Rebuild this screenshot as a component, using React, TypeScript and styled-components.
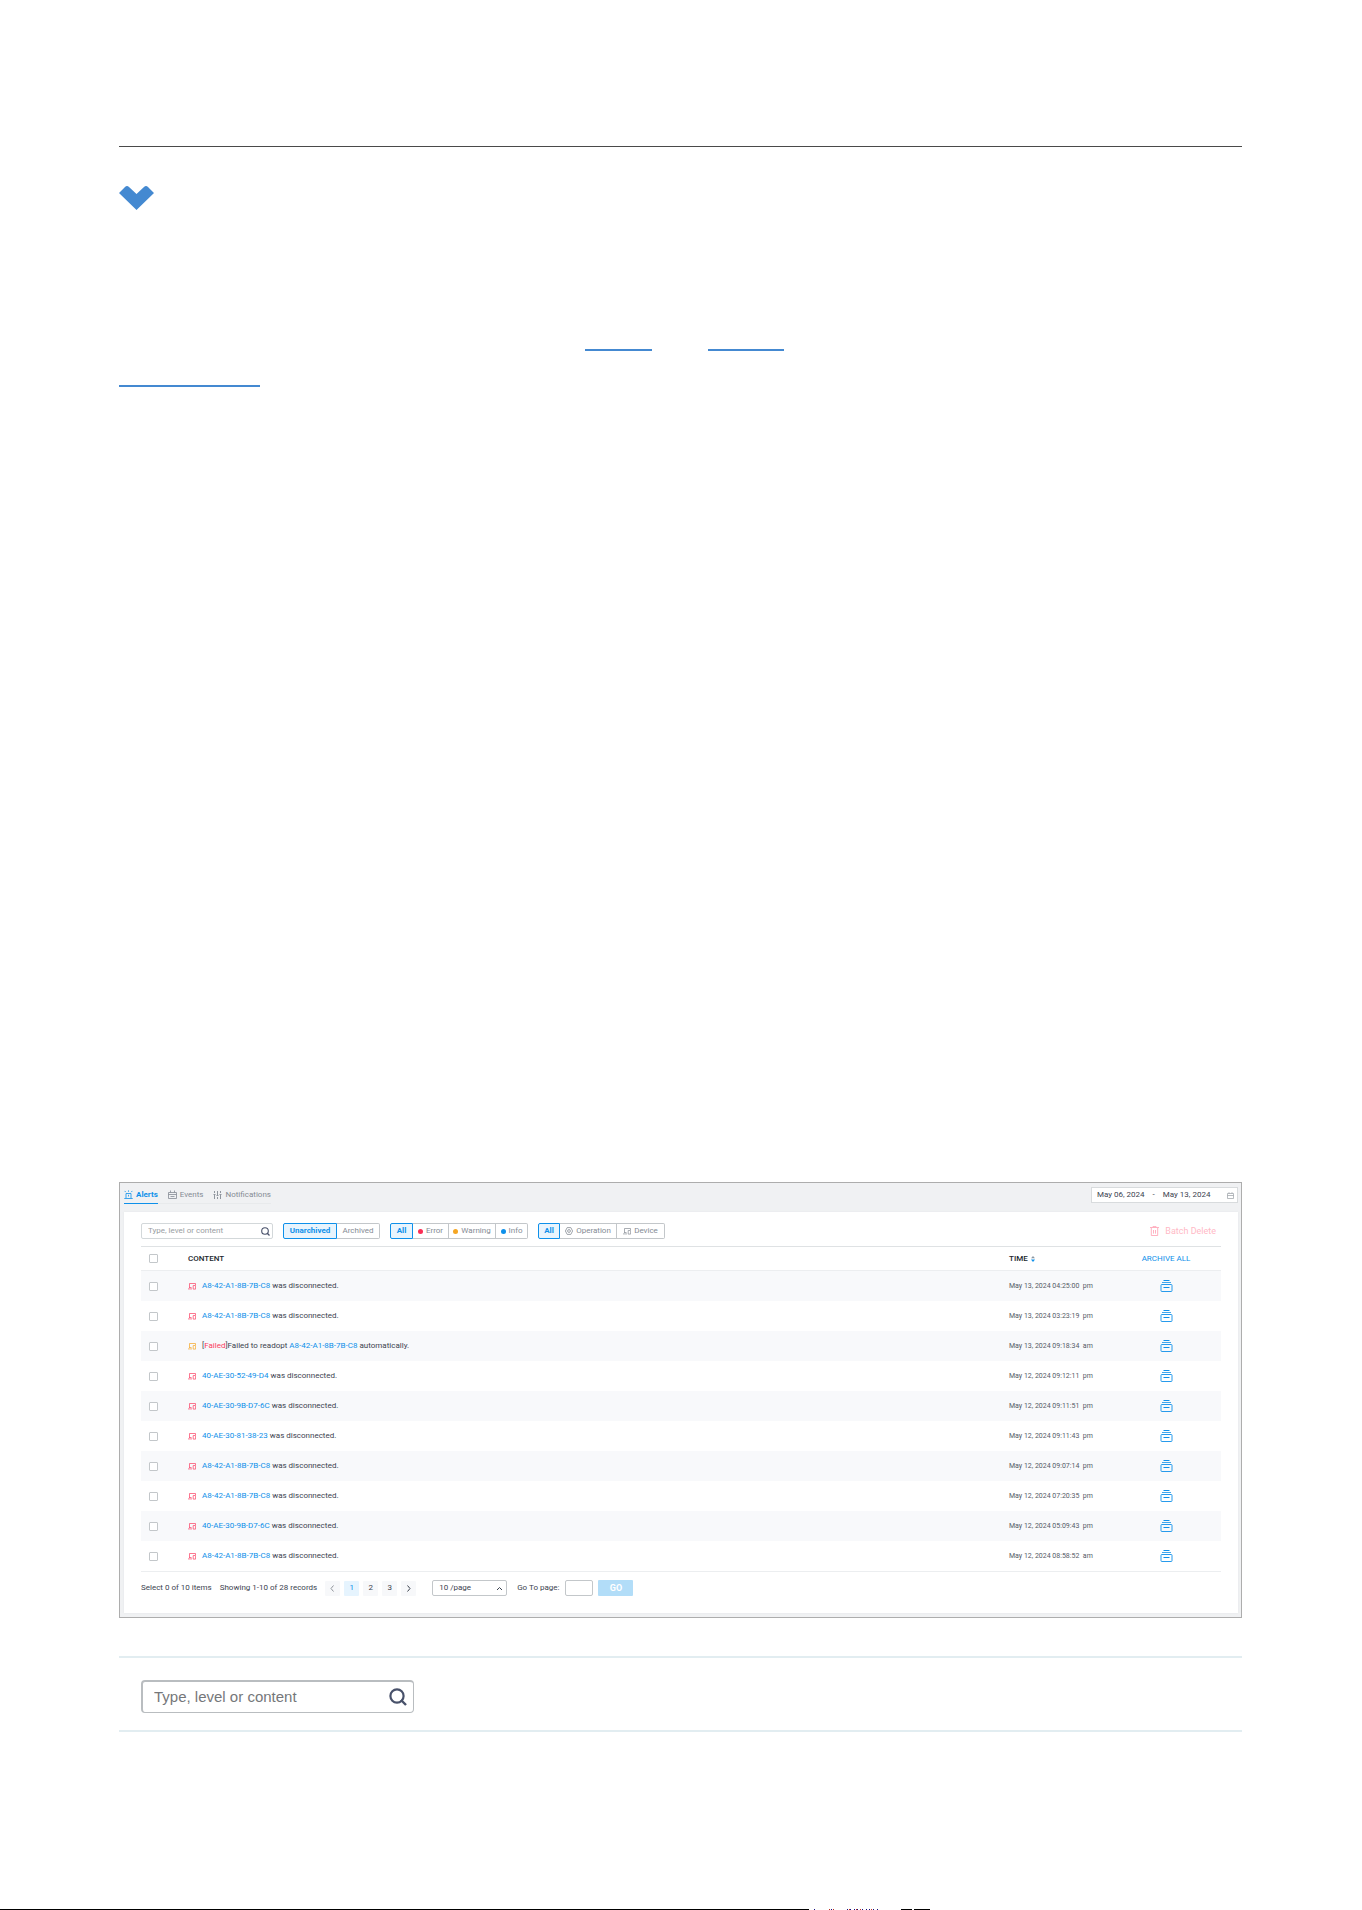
import React from "react";
import styled, { createGlobalStyle } from "styled-components";

const BLUE = "#0e90ea";
const INK = "#3c4350";
const MUTED = "#858b94";
const LINE = "#c3c7ca";
const RED = "#fa3d62";
const AMBER = "#f5a623";

const Global = createGlobalStyle`
  *, *::before, *::after { box-sizing: border-box; }
  body { margin: 0; background: #fff; }
  body, button, input, select {
    font-family: Roboto, "Liberation Sans", Arial, sans-serif;
    font-size: 8px;
    line-height: 10px;
    color: ${INK};
  }
  a { color: ${BLUE}; text-decoration: none; }
  button { padding: 0; border: 0; background: none; cursor: pointer; }
  svg { display: block; flex: none; }
`;

const Page = styled.main`
  padding: 146px 120px 177px 119px;
`;

const TopRule = styled.hr`
  margin: 0 0 39px;
  border: 0;
  height: 1px;
  background: #4a4a4a;
`;

const Paragraph = styled.div`
  margin: 105px 0 795px;
`;

const ParagraphLine = styled.div<{ $indent?: number }>`
  display: flex;
  gap: 56px;
  height: 36px;
  padding-left: ${(p) => p.$indent ?? 0}px;
`;

const Underlined = styled.a<{ $width: number }>`
  width: ${(p) => p.$width}px;
  border-bottom: 2px solid #4489d1;
`;

const Panel = styled.section`
  border: 1px solid #adadad;
  background: #f0f1f3;
  padding: 0 3px 4px 4px;
`;

const TopBar = styled.header`
  display: flex;
  justify-content: space-between;
  align-items: center;
  height: 29px;
  padding-bottom: 5px;
`;

const Tabs = styled.nav`
  display: flex;
  gap: 10px;
  height: 17px;
  border-bottom: 1px solid #e8eaec;
`;

const Tab = styled.a<{ $active?: boolean }>`
  display: flex;
  align-items: center;
  gap: 3px;
  height: 17px;
  color: ${(p) => (p.$active ? BLUE : MUTED)};
  font-weight: ${(p) => (p.$active ? 700 : 400)};
  border-bottom: 1px solid ${(p) => (p.$active ? BLUE : "transparent")};
`;

const DateRange = styled.button`
  display: flex;
  align-items: center;
  gap: 8px;
  width: 147px;
  height: 16px;
  padding: 0 3px 0 5px;
  border: 1px solid #d8dbdd;
  background: #fff;
  & > svg { margin-left: auto; }
`;

const Card = styled.div`
  background: #fff;
  padding: 0 17px;
  box-shadow: 0 0 2px #e4e6e8;
`;

const Toolbar = styled.div`
  display: flex;
  align-items: center;
  gap: 10px;
  height: 34px;
  padding-top: 4px;
`;

const SearchBox = styled.label<{ $large?: boolean }>`
  display: flex;
  align-items: center;
  justify-content: space-between;
  width: ${(p) => (p.$large ? 273 : 132)}px;
  height: ${(p) => (p.$large ? 33 : 16)}px;
  padding: ${(p) => (p.$large ? "0 6px 0 11px" : "0 2px 0 6px")};
  border: ${(p) => (p.$large ? "2px solid #b9bdc0" : "1px solid #d3d8da")};
  border-width: ${(p) => (p.$large ? "2px 1px 1px 2px" : "1px")};
  border-radius: ${(p) => (p.$large ? 4 : 2)}px;
  background: #fff;
`;

const SearchInput = styled.input<{ $large?: boolean }>`
  flex: 1;
  min-width: 0;
  padding: 0;
  border: 0;
  outline: 0;
  background: none;
  font-family: ${(p) => (p.$large ? '"Liberation Sans", Arial, sans-serif' : "inherit")};
  font-size: ${(p) => (p.$large ? 15 : 8)}px;
  line-height: ${(p) => (p.$large ? 18 : 10)}px;
  &::placeholder {
    color: ${(p) => (p.$large ? "#75777a" : "#999da2")};
    opacity: 1;
  }
`;

const SegmentGroup = styled.div`
  display: flex;
`;

const Segment = styled.button<{ $width: number; $active?: boolean }>`
  display: flex;
  align-items: center;
  justify-content: center;
  gap: 3px;
  width: ${(p) => p.$width}px;
  height: 16px;
  color: ${(p) => (p.$active ? BLUE : MUTED)};
  font-weight: ${(p) => (p.$active ? 700 : 400)};
  background: ${(p) => (p.$active ? "#e8f4fd" : "#fff")};
  border: 1px solid ${(p) => (p.$active ? BLUE : LINE)};
  border-left-width: ${(p) => (p.$active ? 1 : 0)}px;
  &:first-child { border-radius: 2px 0 0 2px; }
  &:last-child { border-radius: 0 2px 2px 0; }
`;

const Dot = styled.span<{ $color: string }>`
  width: 5px;
  height: 5px;
  border-radius: 50%;
  background: ${(p) => p.$color};
`;

const BatchDelete = styled.button`
  display: flex;
  align-items: center;
  gap: 6px;
  margin-left: auto;
  padding-right: 5px;
  color: #ffb9c6;
  font-size: 9px;
`;

const Table = styled.table`
  width: 100%;
  border-collapse: separate;
  border-spacing: 0;
  table-layout: fixed;
`;

const Head = styled.th<{ $width?: number; $center?: boolean }>`
  width: ${(p) => (p.$width ? `${p.$width}px` : "auto")};
  height: 25px;
  padding: 0;
  text-align: ${(p) => (p.$center ? "center" : "left")};
  font-weight: 500;
  color: #22262e;
  border-top: 1px solid #dfe2e4;
  border-bottom: 1px solid #eceef0;
`;

const HeadLabel = styled.span`
  display: flex;
  align-items: center;
  gap: 3px;
`;

const Row = styled.tr`
  &:nth-child(odd) { background: #f8f9fb; }
`;

const Cell = styled.td<{ $center?: boolean }>`
  height: 30px;
  padding: 0;
  text-align: ${(p) => (p.$center ? "center" : "left")};
`;

const Tick = styled.input`
  display: block;
  appearance: none;
  width: 9px;
  height: 9px;
  margin: 0 0 0 8px;
  border: 1px solid ${LINE};
  border-radius: 1px;
  background: #fff;
`;

const Message = styled.div`
  display: flex;
  align-items: center;
  gap: 6px;
`;

const Failed = styled.span`
  color: ${RED};
`;

const Time = styled.time`
  display: block;
  font-size: 7px;
  color: #555b66;
  white-space: pre;
`;

const IconButton = styled.button`
  display: inline-block;
  vertical-align: middle;
`;

const ArchiveAll = styled.button`
  color: ${BLUE};
  font-weight: 400;
`;

const Footer = styled.footer`
  display: flex;
  align-items: center;
  gap: 8px;
  height: 42px;
  padding-bottom: 9px;
  border-top: 1px solid #eceef0;
`;

const Pager = styled.div`
  display: flex;
  gap: 4px;
`;

const PageButton = styled.button<{ $active?: boolean }>`
  display: flex;
  align-items: center;
  justify-content: center;
  width: 15px;
  height: 15px;
  border-radius: 1px;
  background: ${(p) => (p.$active ? "#e6f4fe" : "#f7f8fa")};
  color: ${(p) => (p.$active ? BLUE : INK)};
`;

const SizePicker = styled.label`
  display: grid;
  align-items: center;
  width: 75px;
  margin: 0 2px 0 8px;
  & > * { grid-area: 1 / 1; }
  & > svg { justify-self: end; margin-right: 4px; pointer-events: none; }
`;

const Select = styled.select`
  appearance: none;
  width: 100%;
  height: 16px;
  padding: 0 6px;
  border: 1px solid ${LINE};
  border-radius: 2px;
  background: #fff;
`;

const GoTo = styled.label`
  display: flex;
  align-items: center;
  gap: 6px;
`;

const PageInput = styled.input`
  width: 28px;
  height: 16px;
  padding: 0 3px;
  border: 1px solid ${LINE};
  border-radius: 2px;
`;

const GoForm = styled.form`
  display: flex;
  gap: 5px;
`;

const GoButton = styled.button`
  width: 35px;
  height: 16px;
  border-radius: 1px;
  background: #b2ddf8;
  color: #fff;
  font-size: 9px;
  font-weight: 700;
`;

const SearchSection = styled.section`
  margin-top: 38px;
  padding: 22px 22px 17px;
  border-top: 2px solid #e2edf1;
  border-bottom: 2px solid #e2edf1;
`;

const EdgeStrip = styled.div`
  display: flex;
  width: 100%;
  height: 1px;
`;

const EdgeBar = styled.div`
  width: 809px;
  background: #000;
`;

const Heart = () => (
  <svg width="35" height="24" viewBox="0 0 35 24" aria-hidden="true">
    <path d="M0 7 6 1Q8-1 10 1L17.5 8 25 1Q27-1 29 1L35 7 17.5 24Z" fill="#4489d1" />
  </svg>
);

const SearchIcon = ({ size }: { size: number }) => (
  <svg width={size} height={size} viewBox="0 0 18 18" fill="none" stroke="#48516a" aria-hidden="true">
    <circle cx="8" cy="8" r="6.6" strokeWidth="2.2" />
    <path d="m12 12 5 5" strokeWidth="2.4" />
  </svg>
);

const AlarmIcon = () => (
  <svg width="9" height="9" viewBox="0 0 9 9" fill="none" stroke={BLUE} strokeWidth=".8" aria-hidden="true">
    <path d="M2 8V3.5h5V8M.3 8.5h8.4M4.5.4v1.4M.6.9l1.2 1.2M8.4.9 7.2 2.1M4.5 4.8v1.7" />
  </svg>
);

const EventsIcon = () => (
  <svg width="9" height="9" viewBox="0 0 9 9" fill="none" stroke={MUTED} strokeWidth=".8" aria-hidden="true">
    <path d="M.5 2.5h8v6h-8ZM.5 4.5h8M2.5.5v2M6.5.5v2M2.5 6.5h4" />
  </svg>
);

const CalendarIcon = () => (
  <svg width="7" height="7" viewBox="0 0 7 7" fill="none" stroke="#9a9fa5" strokeWidth=".7" aria-hidden="true">
    <path d="M.5 1.5h6v5h-6ZM.5 3.5h6M2 .2v1.3M5 .2v1.3" />
  </svg>
);

const SlidersIcon = () => (
  <svg width="9" height="8" viewBox="0 0 9 8" fill="none" stroke={MUTED} strokeWidth=".9" aria-hidden="true">
    <path d="M1.5 0v2M1.5 4v4M4.5 0v4M4.5 6v2M7.5 0v2M7.5 4v4M.5 3.5h2M3.5 4.5h2M6.5 3.5h2" />
  </svg>
);

const GearIcon = () => (
  <svg width="8" height="8" viewBox="0 0 8 8" fill="none" stroke={MUTED} strokeWidth=".8" aria-hidden="true">
    <path d="M2.2.6h3.6L7.6 4 5.8 7.4H2.2L.4 4Z" />
    <circle cx="4" cy="4" r="1.4" />
  </svg>
);

const DeviceIcon = ({ color }: { color: string }) => (
  <svg width="8" height="8" viewBox="0 0 8 8" fill="none" stroke={color} strokeWidth=".7" aria-hidden="true">
    <path d="M1.5 6V1.5h6V3M0 6.9h4M7.6 3.5v3.6H5.2V3.5ZM1.5 5.5h2" />
  </svg>
);

const TrashIcon = () => (
  <svg width="9" height="10" viewBox="0 0 9 10" fill="none" stroke="#ffa9ba" strokeWidth=".9" aria-hidden="true">
    <path d="M0 1.5h9M3 1.2V.4h3v.8M1.3 2v7.5h6.4V2M3.5 4v3.6M5.5 4v3.6" />
  </svg>
);

const SortIcon = () => (
  <svg width="4" height="6" viewBox="0 0 4 6" aria-hidden="true">
    <path d="M0 2.3 2 0l2 2.3Z" fill="#8b97a3" />
    <path d="M0 3.6h4L2 6Z" fill={BLUE} />
  </svg>
);

const ArchiveIcon = () => (
  <svg width="13" height="12" viewBox="0 0 13 12" fill="none" stroke={BLUE} aria-hidden="true">
    <path d="M3.5.5h6" />
    <path d="M2 2.5h9" strokeWidth=".8" />
    <rect x="1" y="4.5" width="11" height="7" rx=".8" strokeWidth=".9" />
    <path d="M3.5 7.5h6" />
  </svg>
);

const Chevron = ({ d, color = INK }: { d: string; color?: string }) => (
  <svg width="7" height="7" viewBox="0 0 7 7" fill="none" stroke={color} aria-hidden="true">
    <path d={d} />
  </svg>
);

const EdgeBits = () => (
  <svg width="125" height="1" viewBox="0 0 125 1" shapeRendering="crispEdges" aria-hidden="true">
    {[5, 22, 38, 41, 45, 48, 53, 57, 60, 64, 68].map((x) => (
      <rect key={x} x={x} width="1" height="1" fill="#1a1080" />
    ))}
    {[20, 24, 40, 47, 51, 62].map((x) => (
      <rect key={x} x={x} width="1" height="1" fill="#c03020" />
    ))}
    <rect x="92" width="11" height="1" fill="#000" />
    <rect x="105" width="16" height="1" fill="#000" />
  </svg>
);

type Alert = { mac: string; time: string; failed?: boolean };

const alerts: Alert[] = [
  { mac: "A8-42-A1-8B-7B-C8", time: "May 13, 2024 04:25:00  pm" },
  { mac: "A8-42-A1-8B-7B-C8", time: "May 13, 2024 03:23:19  pm" },
  { mac: "A8-42-A1-8B-7B-C8", time: "May 13, 2024 09:18:34  am", failed: true },
  { mac: "40-AE-30-52-49-D4", time: "May 12, 2024 09:12:11  pm" },
  { mac: "40-AE-30-9B-D7-6C", time: "May 12, 2024 09:11:51  pm" },
  { mac: "40-AE-30-81-38-23", time: "May 12, 2024 09:11:43  pm" },
  { mac: "A8-42-A1-8B-7B-C8", time: "May 12, 2024 09:07:14  pm" },
  { mac: "A8-42-A1-8B-7B-C8", time: "May 12, 2024 07:20:35  pm" },
  { mac: "40-AE-30-9B-D7-6C", time: "May 12, 2024 05:09:43  pm" },
  { mac: "A8-42-A1-8B-7B-C8", time: "May 12, 2024 08:58:52  am" },
];

export default function App() {
  return (
    <>
      <Global />
      <Page>
        <TopRule />
        <Heart />
        <Paragraph>
          <ParagraphLine $indent={466}>
            <Underlined href="#alerts" $width={67} aria-label="Alerts" />
            <Underlined href="#events" $width={76} aria-label="Events" />
          </ParagraphLine>
          <ParagraphLine>
            <Underlined href="#notifications" $width={141} aria-label="Notifications" />
          </ParagraphLine>
        </Paragraph>

        <Panel>
          <TopBar>
            <Tabs>
              <Tab href="#alerts" $active><AlarmIcon />Alerts</Tab>
              <Tab href="#events"><EventsIcon />Events</Tab>
              <Tab href="#notifications"><SlidersIcon />Notifications</Tab>
            </Tabs>
            <DateRange type="button">
              <span>May 06, 2024</span>
              <span>-</span>
              <span>May 13, 2024</span>
              <CalendarIcon />
            </DateRange>
          </TopBar>

          <Card>
            <Toolbar>
              <SearchBox>
                <SearchInput type="text" aria-label="Search alerts" placeholder="Type, level or content" />
                <SearchIcon size={9} />
              </SearchBox>
              <SegmentGroup>
                <Segment type="button" $width={54} $active>Unarchived</Segment>
                <Segment type="button" $width={43}>Archived</Segment>
              </SegmentGroup>
              <SegmentGroup>
                <Segment type="button" $width={23} $active>All</Segment>
                <Segment type="button" $width={36}><Dot $color="#fb2d55" />Error</Segment>
                <Segment type="button" $width={47}><Dot $color={AMBER} />Warning</Segment>
                <Segment type="button" $width={32}><Dot $color={BLUE} />Info</Segment>
              </SegmentGroup>
              <SegmentGroup>
                <Segment type="button" $width={22} $active>All</Segment>
                <Segment type="button" $width={57}><GearIcon />Operation</Segment>
                <Segment type="button" $width={48}><DeviceIcon color={MUTED} />Device</Segment>
              </SegmentGroup>
              <BatchDelete type="button"><TrashIcon />Batch Delete</BatchDelete>
            </Toolbar>

            <Table>
              <thead>
                <tr>
                  <Head $width={47}><Tick type="checkbox" aria-label="Select all" /></Head>
                  <Head>CONTENT</Head>
                  <Head $width={102}><HeadLabel>TIME<SortIcon /></HeadLabel></Head>
                  <Head $width={110} $center><ArchiveAll type="button">ARCHIVE ALL</ArchiveAll></Head>
                </tr>
              </thead>
              <tbody>
                {alerts.map((alert) => (
                  <Row key={alert.time}>
                    <Cell><Tick type="checkbox" aria-label={`Select ${alert.mac}`} /></Cell>
                    <Cell>
                      <Message>
                        <DeviceIcon color={alert.failed ? AMBER : RED} />
                        {alert.failed ? (
                          <span>[<Failed>Failed</Failed>]Failed to readopt <a href="#device">{alert.mac}</a> automatically.</span>
                        ) : (
                          <span><a href="#device">{alert.mac}</a> was disconnected.</span>
                        )}
                      </Message>
                    </Cell>
                    <Cell><Time>{alert.time}</Time></Cell>
                    <Cell $center><IconButton type="button" aria-label="Archive"><ArchiveIcon /></IconButton></Cell>
                  </Row>
                ))}
              </tbody>
            </Table>

            <Footer>
              <span>Select 0 of 10 items</span>
              <span>Showing 1-10 of 28 records</span>
              <Pager>
                <PageButton type="button" aria-label="Previous page"><Chevron d="M4.5.5 2 3.5l2.5 3" color="#8f949b" /></PageButton>
                <PageButton type="button" $active>1</PageButton>
                <PageButton type="button">2</PageButton>
                <PageButton type="button">3</PageButton>
                <PageButton type="button" aria-label="Next page"><Chevron d="M2.5.5 5 3.5l-2.5 3" /></PageButton>
              </Pager>
              <SizePicker>
                <Select aria-label="Rows per page" defaultValue="10">
                  <option value="10">10 /page</option>
                  <option value="20">20 /page</option>
                </Select>
                <Chevron d="M1 5l2.5-2.5L6 5" />
              </SizePicker>
              <GoForm>
                <GoTo>Go To page:<PageInput type="text" /></GoTo>
                <GoButton type="button">GO</GoButton>
              </GoForm>
            </Footer>
          </Card>
        </Panel>

        <SearchSection>
          <SearchBox $large>
            <SearchInput $large type="text" aria-label="Type, level or content" placeholder="Type, level or content" />
            <SearchIcon size={18} />
          </SearchBox>
        </SearchSection>
      </Page>
      <EdgeStrip>
        <EdgeBar />
        <EdgeBits />
      </EdgeStrip>
    </>
  );
}
